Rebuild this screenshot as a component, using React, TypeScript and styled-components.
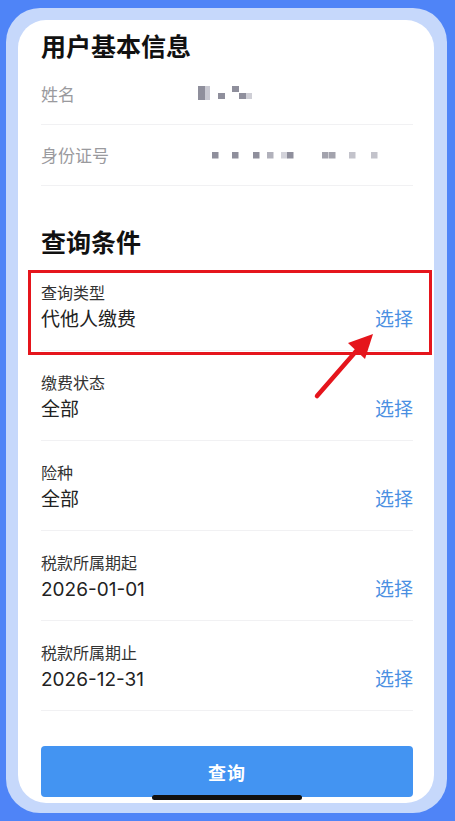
import React from "react";
import styled, { createGlobalStyle } from "styled-components";

const Global = createGlobalStyle`
  html, body { margin: 0; padding: 0; background: #4f84f7; }
  body { font-family: "Noto Sans CJK SC", "Noto Sans", sans-serif; -webkit-font-smoothing: antialiased; }
  * { box-sizing: border-box; }
`;

const Page = styled.div`
  width: 455px;
  height: 821px;
  padding: 8px 8px 8px 6px;
  background: #4f84f7;
`;

const Frame = styled.div`
  width: 441px;
  height: 805px;
  padding: 12px 13px 10px 12px;
  background: #c6d8fb;
  border-radius: 34px;
`;

const Card = styled.div`
  position: relative;
  height: 783px;
  background: #ffffff;
  border-radius: 28px;
  overflow: hidden;
  padding: 8px 21px 0 23px;
  display: flex;
  flex-direction: column;
`;

const SectionTitle = styled.h2<{ $top: number; $bottom: number }>`
  margin: 0;
  padding: ${(p) => p.$top}px 0 ${(p) => p.$bottom}px;
  font-size: 25px;
  line-height: 34px;
  font-weight: 700;
  color: #111111;
`;

const InfoRow = styled.div`
  height: 61px;
  display: flex;
  align-items: center;
  border-bottom: 1px solid #f1f1f3;
`;

const InfoLabel = styled.span`
  width: 156px;
  font-size: 17px;
  line-height: 24px;
  color: #9a9a9e;
`;

const Mosaic = styled.svg<{ $shift: number }>`
  display: block;
  margin-left: ${(p) => p.$shift}px;
`;

const QueryRow = styled.div`
  height: 90px;
  padding-top: 20px;
  display: grid;
  grid-template-columns: 1fr auto;
  grid-template-rows: 22px 26px;
  row-gap: 4px;
  align-items: center;
  border-bottom: 1px solid #f1f1f3;
`;

const QueryLabel = styled.span`
  grid-column: 1;
  grid-row: 1;
  font-size: 16px;
  line-height: 22px;
  color: #333333;
`;

const QueryValue = styled.span`
  grid-column: 1;
  grid-row: 2;
  font-family: Inter, "Noto Sans CJK SC", sans-serif;
  font-size: 19px;
  line-height: 26px;
  color: #222222;
`;

const Pick = styled.span`
  grid-column: 2;
  grid-row: 2;
  font-family: Inter, "Noto Sans CJK SC", sans-serif;
  font-size: 19px;
  line-height: 26px;
  color: #4b90e2;
`;

const SubmitButton = styled.button`
  margin-top: 35px;
  height: 51px;
  width: 100%;
  border: none;
  border-radius: 4px;
  background: #4394f2;
  color: #ffffff;
  font-family: inherit;
  font-size: 18px;
  font-weight: 700;
  letter-spacing: 1px;
`;

const Highlight = styled.div`
  position: absolute;
  left: 10px;
  top: 250px;
  width: 404px;
  height: 85px;
  border: 3px solid #e5151c;
`;

const Arrow = styled.svg`
  position: absolute;
  left: 290px;
  top: 308px;
`;

const HomeBar = styled.div`
  position: absolute;
  left: 134px;
  bottom: 3px;
  width: 150px;
  height: 5px;
  border-radius: 3px;
  background: #111111;
`;

const NameMosaic = () => (
  <Mosaic $shift={0} width="60" height="18" viewBox="0 0 60 18">
    <rect x="1" y="1" width="7" height="14" fill="#8f8f9c" />
    <rect x="8" y="1" width="5" height="14" fill="#c9c9d2" />
    <rect x="21" y="8" width="7" height="6" fill="#8f8f9c" />
    <rect x="35" y="1" width="7" height="6" fill="#8f8f9c" />
    <rect x="42" y="8" width="7" height="6" fill="#8f8f9c" />
    <rect x="49" y="8" width="6" height="6" fill="#cfcfd6" />
  </Mosaic>
);

const IdMosaic = () => (
  <Mosaic $shift={15} width="170" height="10" viewBox="0 0 170 10">
    {[
      [0, "#8f8f9c"],
      [20, "#8f8f9c"],
      [41, "#8f8f9c"],
      [55, "#b1b1bb"],
      [69, "#d3d3da"],
      [75, "#8f8f9c"],
      [110, "#a3a3ad"],
      [117, "#a3a3ad"],
      [137, "#c3c3cb"],
      [159, "#c3c3cb"],
    ].map(([x, c], i) => (
      <rect key={i} x={x as number} y="2" width="6.5" height="6.5" fill={c as string} />
    ))}
  </Mosaic>
);

const rows = [
  { label: "查询类型", value: "代他人缴费" },
  { label: "缴费状态", value: "全部" },
  { label: "险种", value: "全部" },
  { label: "税款所属期起", value: "2026-01-01" },
  { label: "税款所属期止", value: "2026-12-31" },
];

export default function App() {
  return (
    <>
      <Global />
      <Page>
        <Frame>
          <Card>
            <SectionTitle $top={0} $bottom={2}>用户基本信息</SectionTitle>
            <InfoRow>
              <InfoLabel>姓名</InfoLabel>
              <NameMosaic />
            </InfoRow>
            <InfoRow>
              <InfoLabel>身份证号</InfoLabel>
              <IdMosaic />
            </InfoRow>
            <SectionTitle $top={38} $bottom={3}>查询条件</SectionTitle>
            {rows.map((r) => (
              <QueryRow key={r.label}>
                <QueryLabel>{r.label}</QueryLabel>
                <QueryValue>{r.value}</QueryValue>
                <Pick>选择</Pick>
              </QueryRow>
            ))}
            <SubmitButton>查询</SubmitButton>
            <Highlight />
            <Arrow width="80" height="80" viewBox="0 0 80 80">
              <line x1="9" y1="68" x2="50" y2="21" stroke="#e5151c" strokeWidth="4.5" strokeLinecap="round" />
              <polygon points="65,6 40,15 57,31" fill="#e5151c" />
            </Arrow>
            <HomeBar />
          </Card>
        </Frame>
      </Page>
    </>
  );
}
